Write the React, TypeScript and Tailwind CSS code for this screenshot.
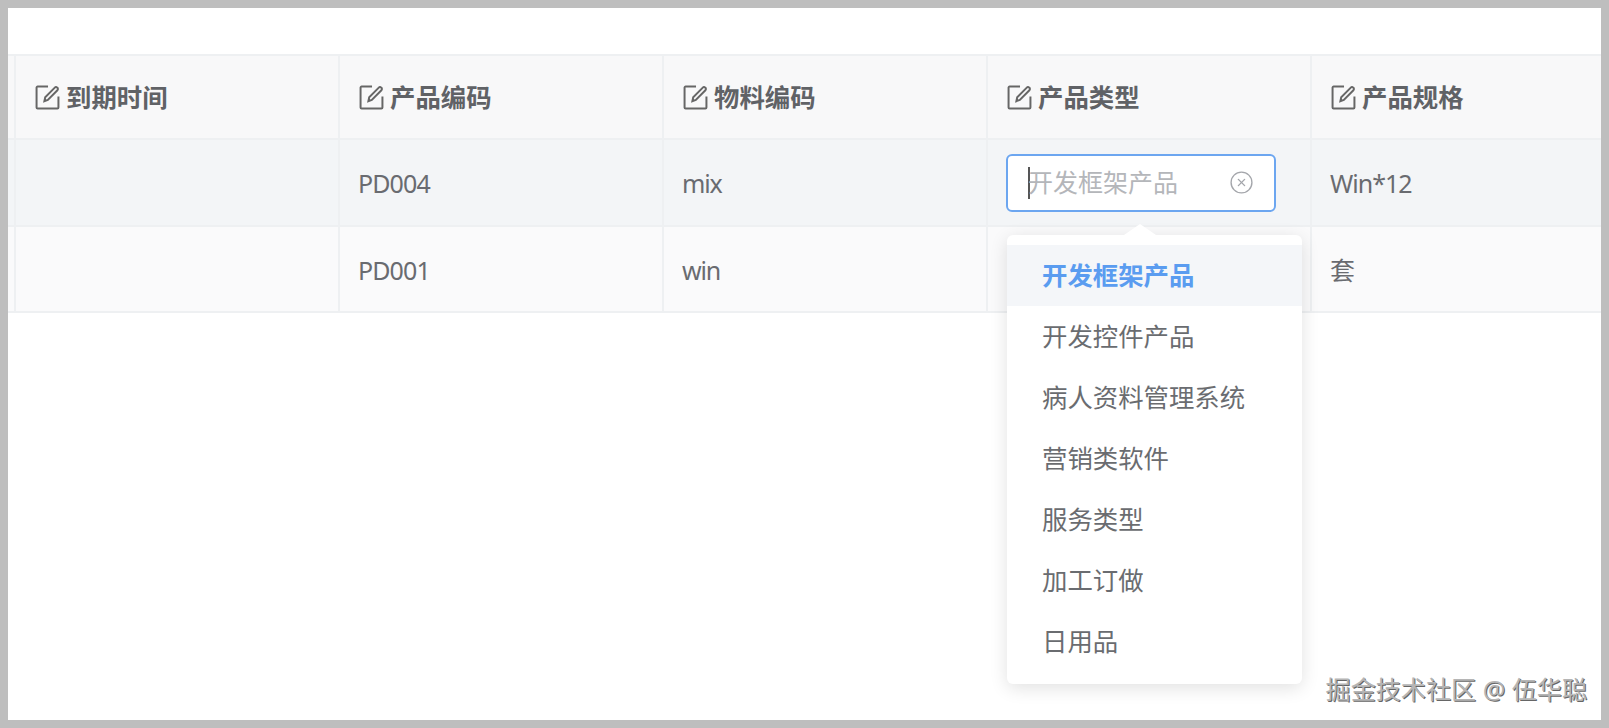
import { CircleX } from 'lucide-react'

const font = "font-['Noto_Sans','Noto_Sans_CJK_SC',sans-serif]"

const headers = ['到期时间', '产品编码', '物料编码', '产品类型', '产品规格']

const rows = [
  { code: 'PD004', material: 'mix', spec: 'Win*12', height: 'h-[87px]', pad: 'pt-[2px]', bg: 'bg-[#f3f5f7]' },
  { code: 'PD001', material: 'win', spec: '套', height: 'h-[86px]', pad: 'pt-[3px]', bg: 'bg-[#fafafb]' },
]

const options = [
  '开发框架产品',
  '开发控件产品',
  '病人资料管理系统',
  '营销类软件',
  '服务类型',
  '加工订做',
  '日用品',
]

function EditIcon() {
  return (
    <svg width="25" height="25" viewBox="0 0 24 24" fill="none" stroke="#666" strokeWidth="1.9" className="shrink-0">
      <path d="M12.5 1.5H2.5a1 1 0 0 0-1 1v19a1 1 0 0 0 1 1h19a1 1 0 0 0 1-1V11" />
      <path d="M9 15.5l.8-3.8L19 2.5a1.6 1.6 0 0 1 2.3 0l.2.2a1.6 1.6 0 0 1 0 2.3l-9.2 9.4z" />
    </svg>
  )
}

function Cell({ children, className = '' }: { children?: React.ReactNode; className?: string }) {
  return (
    <div className={`flex items-center border-r-2 border-[#eef0f2] ${className}`}>
      {children}
    </div>
  )
}

export default function App() {
  return (
    <div className={`${font} h-screen overflow-hidden border-8 border-[#bebebe] bg-white pt-[46px] text-[#606266]`}>
      <div className="relative">
        {/* Header */}
        <div className="grid h-[86px] grid-cols-[8px_324px_324px_324px_324px_1fr] border-y-2 border-[#eef0f2] bg-[#f8f8f9]">
          <div className="border-r-2 border-[#eef0f2]" />
          {headers.map((title) => (
            <Cell key={title} className="gap-[6px] pl-[19px] text-[25.4px] font-bold last:border-r-0">
              <EditIcon />
              <span>{title}</span>
            </Cell>
          ))}
        </div>

        {/* Rows */}
        {rows.map((row, index) => (
          <div
            key={row.code}
            className={`grid grid-cols-[8px_324px_324px_324px_324px_1fr] border-b-2 border-[#eef0f2] text-[25px] text-[#696b70] ${row.height} ${row.bg}`}
          >
            <div className="border-r-2 border-[#eef0f2]" />
            <Cell />
            <Cell className={`pl-[18px] tracking-[-0.9px] ${row.pad}`}>{row.code}</Cell>
            <Cell className={`pl-[18px] tracking-[-1.2px] ${row.pad}`}>{row.material}</Cell>
            <Cell className="pl-[18px]">
              {index === 0 && (
                <div className="flex h-[58px] w-[270px] items-center rounded-[6px] border-2 border-[#6ca6f0] bg-white pl-[20px] pr-[20px]">
                  <span className="-mr-[2px] h-[32px] w-[2px] shrink-0 bg-[#555]" />
                  <span className="flex-1 text-[#b4b6ba]">开发框架产品</span>
                  <CircleX size={25} strokeWidth={1.3} className="text-[#a4a6ab]" />
                </div>
              )}
            </Cell>
            <div className={`flex items-center pl-[18px] tracking-[-1px] ${row.pad}`}>{row.spec}</div>
          </div>
        ))}

        {/* Select dropdown */}
        <div className="absolute left-[999px] top-[181px] w-[295px] rounded-[6px] bg-white pb-[12px] pt-[10px] shadow-[0_4px_18px_rgba(0,0,0,0.12)]">
          <div className="absolute -top-[11px] left-[117px] h-0 w-0 border-x-[16px] border-b-[11px] border-x-transparent border-b-white" />
          {options.map((option, index) => (
            <div
              key={option}
              className={`flex h-[61px] items-center pl-[35px] text-[25.4px] ${
                index === 0 ? 'bg-[#f4f6f9] font-bold text-[#5a9cf0]' : 'text-[#6a6c70]'
              }`}
            >
              {option}
            </div>
          ))}
        </div>
      </div>

      {/* Watermark */}
      <div className="absolute bottom-[19px] right-[22px] text-[25.1px] text-[#b5b5b5] [text-shadow:1px_1px_0_#666,-1px_-1px_0_#fff]">
        掘金技术社区 @ 伍华聪
      </div>
    </div>
  )
}
